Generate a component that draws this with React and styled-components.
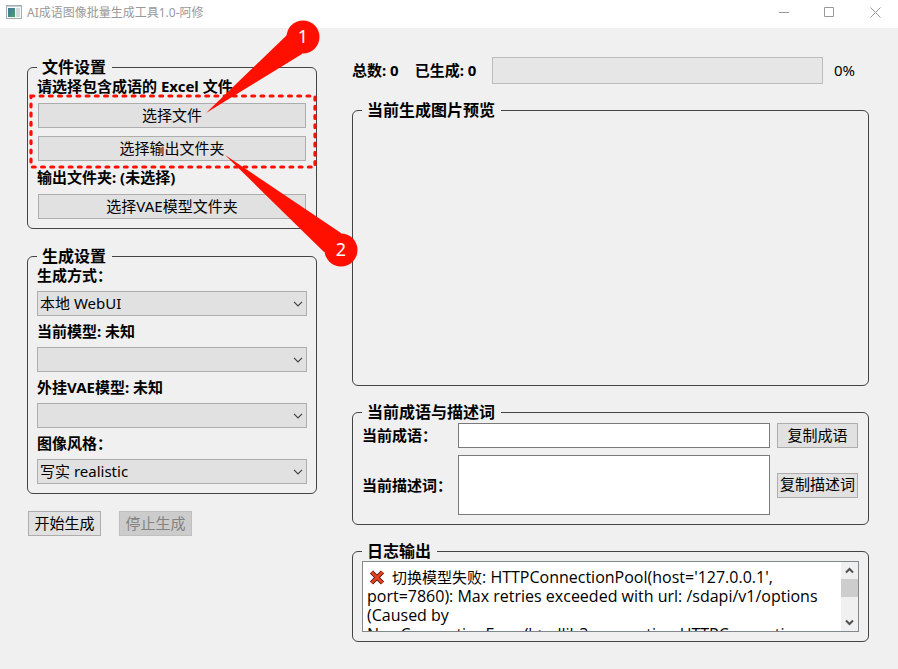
import styled, { createGlobalStyle } from "styled-components";

const GlobalStyle = createGlobalStyle`
  * {
    box-sizing: border-box;
  }

  body {
    margin: 0;
    background: #f0f0f0;
    color: #000;
    font-family: "Noto Sans", "Noto Sans CJK SC", sans-serif;
    font-size: 15px;
  }

  button, input, select, textarea {
    font: inherit;
    color: inherit;
  }
`;

const LOG_LINES = [
  "port=7860): Max retries exceeded with url: /sdapi/v1/options",
  "(Caused by",
  "NewConnectionError('<urllib3.connection.HTTPConnection",
];

export default function App() {
  return (
    <Window>
      <GlobalStyle />
      <TitleBar />
      <Main>
        <Side>
          <FileSettings />
          <GenerateSettings />
          <Actions>
            <Button>开始生成</Button>
            <Button disabled>停止生成</Button>
          </Actions>
        </Side>
        <Content>
          <ProgressRow>
            <Label>总数: 0</Label>
            <Label>已生成: 0</Label>
            <Progress value={0} max={100} aria-label="生成进度" />
            <Percent>0%</Percent>
          </ProgressRow>
          <PreviewGroup>
            <Legend>当前生成图片预览</Legend>
          </PreviewGroup>
          <PromptGroup />
          <LogGroup />
        </Content>
      </Main>
      <Callouts />
    </Window>
  );
}

const TitleBar = () => (
  <Bar>
    <AppIcon width="16" height="14" viewBox="0 0 16 14">
      <defs>
        <linearGradient id="pane" x1="0" y1="0" x2="1" y2="1">
          <stop offset="0" stopColor="#3f74a8" />
          <stop offset="1" stopColor="#46a35f" />
        </linearGradient>
      </defs>
      <rect x="0.5" y="0.5" width="15" height="13" fill="#f8f9f9" stroke="#a3acb3" />
      <rect x="1" y="1" width="14" height="1" fill="#c9d0d5" />
      <rect x="2" y="3" width="7" height="9" fill="url(#pane)" />
      <rect x="10" y="3" width="4" height="9" fill="#d3dadd" />
    </AppIcon>
    <Title>AI成语图像批量生成工具1.0-阿修</Title>
    <WindowButton aria-label="最小化">
      <svg width="11" height="11" viewBox="0 0 11 11">
        <path d="M1 5.5H11" />
      </svg>
    </WindowButton>
    <WindowButton aria-label="最大化">
      <svg width="11" height="11" viewBox="0 0 11 11">
        <path d="M0.5 0.5H9.5V9.5H0.5Z" />
      </svg>
    </WindowButton>
    <WindowButton aria-label="关闭">
      <svg width="11" height="11" viewBox="0 0 11 11">
        <path d="M0.5 0.5L10.5 10.5M10.5 0.5L0.5 10.5" />
      </svg>
    </WindowButton>
  </Bar>
);

const FileSettings = () => (
  <Group>
    <Legend>文件设置</Legend>
    <Stack $gap={8}>
      <Label>请选择包含成语的 Excel 文件</Label>
      <Button>选择文件</Button>
      <Button>选择输出文件夹</Button>
      <Label>输出文件夹: (未选择)</Label>
      <Button>选择VAE模型文件夹</Button>
    </Stack>
  </Group>
);

const GenerateSettings = () => (
  <Group>
    <Legend>生成设置</Legend>
    <Stack $gap={7}>
      <Dropdown id="mode" label="生成方式：" value="本地 WebUI" />
      <Dropdown id="model" label="当前模型: 未知" />
      <Dropdown id="vae" label="外挂VAE模型: 未知" />
      <Dropdown id="style" label="图像风格：" value="写实 realistic" />
    </Stack>
  </Group>
);

const Dropdown = ({ id, label, value = "" }) => (
  <>
    <Label as="label" htmlFor={id}>
      {label}
    </Label>
    <SelectWrap>
      <Select id={id} defaultValue={value}>
        <option value={value}>{value}</option>
      </Select>
      <Chevron width="10" height="6" viewBox="0 0 10 6">
        <path d="M1 0.8L5 4.8L9 0.8" />
      </Chevron>
    </SelectWrap>
  </>
);

const PromptGroup = () => (
  <Group>
    <Legend>当前成语与描述词</Legend>
    <PromptGrid>
      <Label as="label" htmlFor="idiom">
        当前成语：
      </Label>
      <TextInput id="idiom" />
      <Button>复制成语</Button>
      <Label as="label" htmlFor="prompt">
        当前描述词：
      </Label>
      <TextArea id="prompt" />
      <Button>复制描述词</Button>
    </PromptGrid>
  </Group>
);

const LogGroup = () => (
  <FlushGroup>
    <Legend>日志输出</Legend>
    <LogBox>
      <LogText role="log">
        <LogLine>
          <CrossMark width="16" height="15" viewBox="0 0 16 15">
            <path d="M2.5 2L13.5 13M13.5 2L2.5 13" stroke="#3b1512" strokeWidth="4.4" />
            <path d="M2.5 2L13.5 13M13.5 2L2.5 13" stroke="#e8401c" strokeWidth="2.8" />
          </CrossMark>
          <LogMessage>切换模型失败</LogMessage>: HTTPConnectionPool(host='127.0.0.1',
        </LogLine>
        {LOG_LINES.map((line) => (
          <LogLine key={line}>{line}</LogLine>
        ))}
      </LogText>
      <ScrollBar>
        <ScrollArrow aria-label="向上滚动">
          <svg width="9" height="7" viewBox="0 0 9 7">
            <path d="M1 5.5L4.5 2L8 5.5" />
          </svg>
        </ScrollArrow>
        <ScrollThumb />
        <ScrollArrow aria-label="向下滚动">
          <svg width="9" height="7" viewBox="0 0 9 7">
            <path d="M1 1.5L4.5 5L8 1.5" />
          </svg>
        </ScrollArrow>
      </ScrollBar>
    </LogBox>
  </FlushGroup>
);

const Callouts = () => (
  <CalloutLayer width="360" height="280" viewBox="0 0 360 280">
    <rect
      x="31"
      y="96"
      width="284"
      height="71"
      fill="none"
      stroke="#ff0f00"
      strokeWidth="3.2"
      strokeLinecap="round"
      strokeDasharray="2.8 6.4"
    />
    <path d="M206 113L287 35L303 37L302 54Z" />
    <circle cx="303" cy="37" r="16.5" />
    <path d="M225 155L341 233L340 250L324 252Z" />
    <circle cx="341" cy="250" r="16.5" />
    <text x="303" y="43">
      1
    </text>
    <text x="341" y="256">
      2
    </text>
  </CalloutLayer>
);

const Window = styled.div`
  position: relative;
  display: flex;
  flex-direction: column;
  min-height: 100vh;
`;

const Bar = styled.header`
  display: flex;
  align-items: center;
  height: 28px;
  padding-left: 6px;
  background: #fff;
`;

const AppIcon = styled.svg`
  margin-bottom: 4px;
`;

const Title = styled.h1`
  flex: 1;
  margin: 0 0 3px 5px;
  font-size: 12px;
  font-weight: 400;
  line-height: 16px;
  color: #999;
`;

const WindowButton = styled.button`
  display: flex;
  align-items: center;
  justify-content: center;
  width: 46px;
  height: 25px;
  margin-bottom: 3px;
  padding: 0;
  border: 0;
  background: none;

  svg {
    fill: none;
    stroke: #999;
  }
`;

const Main = styled.main`
  flex: 1;
  display: grid;
  grid-template-columns: 290px 1fr;
  gap: 35px;
  padding: 29px 29px 27px 27px;
`;

const Side = styled.div`
  display: flex;
  flex-direction: column;
  gap: 17px;
`;

const Content = styled.div`
  display: flex;
  flex-direction: column;
  gap: 16px;
  min-width: 0;
`;

const Group = styled.fieldset`
  min-width: 0;
  margin: 0;
  padding: 1px 9px 9px;
  border: 1px solid #444;
  border-radius: 6px;
`;

const PreviewGroup = styled(Group)`
  flex: 1;
  min-height: 120px;
`;

const FlushGroup = styled(Group)`
  padding-top: 0;
`;

const Legend = styled.legend`
  padding: 0 6px 0 5px;
  font-size: 16px;
  font-weight: 700;
  line-height: 20px;
`;

const Stack = styled.div`
  display: flex;
  flex-direction: column;
  gap: ${({ $gap }) => $gap}px;
`;

const Label = styled.span`
  font-size: 15px;
  font-weight: 700;
  line-height: 17px;
  white-space: nowrap;
`;

const Button = styled.button`
  height: 25px;
  min-width: 73px;
  margin: 0 1px;
  padding: 0 2px 2px;
  border: 1px solid #adadad;
  background: #e1e1e1;
  line-height: 20px;
  white-space: nowrap;

  &:disabled {
    border-color: #bfbfbf;
    background: #ccc;
    color: #838383;
  }
`;

const SelectWrap = styled.div`
  position: relative;
  display: flex;
`;

const Select = styled.select`
  appearance: none;
  width: 100%;
  height: 25px;
  padding: 0 20px 2px 2px;
  border: 1px solid #adadad;
  border-radius: 0;
  background: #e1e1e1;
`;

const Chevron = styled.svg`
  position: absolute;
  top: 10px;
  right: 4px;
  fill: none;
  stroke: #444;
  stroke-width: 1.2;
  pointer-events: none;
`;

const Actions = styled.div`
  display: flex;
  gap: 16px;
`;

const ProgressRow = styled.div`
  display: flex;
  align-items: center;
  gap: 16px;
`;

const Progress = styled.progress`
  appearance: none;
  flex: 1;
  min-width: 0;
  height: 27px;
  border: 1px solid #bcbcbc;
  background: #e6e6e6;

  &::-webkit-progress-bar {
    background: #e6e6e6;
  }

  &::-webkit-progress-value {
    background: #06b025;
  }
`;

const Percent = styled.span`
  width: 35px;
  margin-left: -5px;
  line-height: 17px;
`;

const PromptGrid = styled.div`
  display: grid;
  grid-template-columns: 90px 1fr 83px;
  align-items: center;
  gap: 7px 6px;
`;

const TextInput = styled.input`
  width: 100%;
  height: 25px;
  padding: 0 3px;
  border: 1px solid #7a7a7a;
  background: #fff;
`;

const TextArea = styled.textarea`
  display: block;
  width: 100%;
  height: 60px;
  padding: 3px;
  border: 1px solid #7a7a7a;
  background: #fff;
  resize: none;
`;

const LogBox = styled.div`
  display: flex;
  height: 71px;
  border: 1px solid #828790;
  background: #fff;
`;

const LogText = styled.div`
  flex: 1;
  min-width: 0;
  padding: 6px 4px 0;
  overflow: hidden;
  font-family: "Open Sans", "Noto Sans CJK SC", sans-serif;
  font-size: 16px;
`;

const LogLine = styled.div`
  height: 19px;
  line-height: 19px;
  white-space: nowrap;
`;

const LogMessage = styled.span`
  font-size: 15px;
`;

const CrossMark = styled.svg`
  margin: 0 7px 0 2px;
  vertical-align: -2px;
  fill: none;
`;

const ScrollBar = styled.div`
  display: flex;
  flex-direction: column;
  width: 17px;
  background: #f0f0f0;
`;

const ScrollArrow = styled.button`
  display: flex;
  align-items: center;
  justify-content: center;
  height: 17px;
  padding: 0;
  border: 0;
  background: none;

  svg {
    fill: none;
    stroke: #505050;
    stroke-width: 2;
  }

  &:last-child {
    margin-top: auto;
  }
`;

const ScrollThumb = styled.div`
  height: 18px;
  background: #cdcdcd;
`;

const CalloutLayer = styled.svg`
  position: absolute;
  top: 0;
  left: 0;
  fill: #ff0f00;
  pointer-events: none;

  text {
    fill: #fff;
    font-size: 18px;
    text-anchor: middle;
  }
`;
